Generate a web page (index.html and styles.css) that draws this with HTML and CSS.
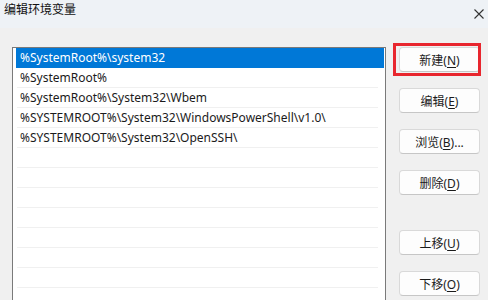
FILE: index.html
```html
<!DOCTYPE html>
<html lang="zh-CN">
<head>
  <meta charset="UTF-8" />
  <title>编辑环境变量</title>
  <link rel="stylesheet" href="styles.css">
</head>
<body>
  <div class="dialog">
    <div class="titlebar">
      <span class="title">编辑环境变量</span>
      <span class="close">
        <svg width="10" height="10" viewBox="0 0 10 10"><path d="M0.5 0.5L9.5 9.5M9.5 0.5L0.5 9.5" stroke="#333" stroke-width="1.1" fill="none"/></svg>
      </span>
    </div>

    <div class="content">
      <div class="list">
        <div class="row selected">%SystemRoot%\system32</div>
        <div class="row">%SystemRoot%</div>
        <div class="row">%SystemRoot%\System32\Wbem</div>
        <div class="row">%SYSTEMROOT%\System32\WindowsPowerShell\v1.0\</div>
        <div class="row">%SYSTEMROOT%\System32\OpenSSH\</div>
        <div class="row"></div>
        <div class="row"></div>
        <div class="row"></div>
        <div class="row"></div>
        <div class="row"></div>
        <div class="row"></div>
        <div class="row"></div>
      </div>

      <div class="buttons">
        <button class="btn marked">新建(<u>N</u>)</button>
        <button class="btn">编辑(<u>E</u>)</button>
        <button class="btn">浏览(<u>B</u>)...</button>
        <button class="btn">删除(<u>D</u>)</button>
        <button class="btn spaced">上移(<u>U</u>)</button>
        <button class="btn">下移(<u>O</u>)</button>
      </div>
    </div>
  </div>
</body>
</html>
```

FILE: styles.css
```css
body {
  margin: 0;
  font-family: "Noto Sans", "Noto Sans CJK SC", sans-serif;
  font-size: 12px;
  color: #1b1b1b;
  background: #f0f0f0;
}
.dialog {
  width: 488px;
  height: 300px;
  overflow: hidden;
}
.titlebar {
  height: 28px;
  display: flex;
  justify-content: space-between;
  background: #eef2f6;
}
.title {
  padding: 2px 0 0 4px;
  font-size: 12px;
  line-height: 16px;
  color: #111;
}
.close {
  padding: 6px 4px 0 0;
  width: 10px;
}
.content {
  display: flex;
  padding: 19px 0 0 12px;
}
.list {
  width: 367px;
  height: 300px;
  flex-shrink: 0;
  background: #fff;
  border: 1px solid #7a7a7a;
  border-bottom: none;
  padding: 0 1px 0 4px;
}
.row {
  height: 19px;
  line-height: 19px;
  padding-left: 3px;
  border-bottom: 1px solid #f0f0f0;
  margin-right: 6px;
  white-space: nowrap;
}
.row.selected {
  height: 20px;
  line-height: 20px;
  border-bottom: none;
  background: #0078d7;
  color: #fff;
  margin-left: -1px;
  margin-right: 0;
  padding-left: 4px;
}
.buttons {
  display: flex;
  flex-direction: column;
  gap: 16px;
  padding: 0 0 0 13px;
}
.btn {
  position: relative;
  width: 81px;
  height: 25px;
  background: #fdfdfd;
  border: 1px solid #d9d9d9;
  border-bottom-color: #c6c6c6;
  border-radius: 4px;
  font-family: inherit;
  font-size: 12px;
  color: #1b1b1b;
  padding: 0;
}
.btn u {
  text-underline-offset: 2px;
}
.btn.marked::after {
  content: "";
  position: absolute;
  left: -7px;
  right: -2px;
  top: -5px;
  bottom: -5px;
  border: 3px solid #e8262e;
}
.btn.spaced {
  margin-top: 19px;
}
```
